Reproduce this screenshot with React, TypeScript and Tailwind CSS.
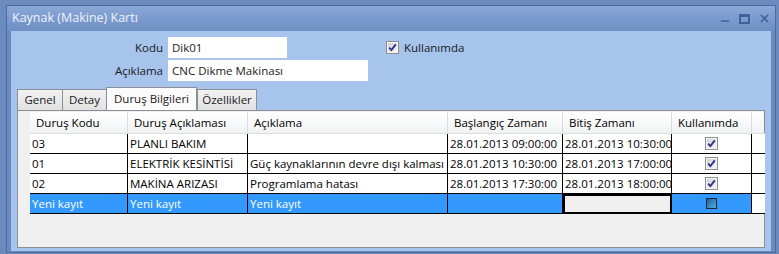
import { Minus, X } from "lucide-react";

const COLS = "grid grid-cols-[11px_98px_120px_200px_115px_109px_80px_13px]";

const HEADERS = [
  "Duruş Kodu",
  "Duruş Açıklaması",
  "Açıklama",
  "Başlangıç Zamanı",
  "Bitiş Zamanı",
  "Kullanımda",
];

const ROWS = [
  ["03", "PLANLI BAKIM", "", "28.01.2013 09:00:00", "28.01.2013 10:30:00"],
  ["01", "ELEKTRİK KESİNTİSİ", "Güç kaynaklarının devre dışı kalması", "28.01.2013 10:30:00", "28.01.2013 17:00:00"],
  ["02", "MAKİNA ARIZASI", "Programlama hatası", "28.01.2013 17:30:00", "28.01.2013 18:00:00"],
];

const TABS = [
  { label: "Genel", w: "w-[45px]" },
  { label: "Detay", w: "w-[44px]" },
  { label: "Duruş Bilgileri", w: "w-[91px]", active: true },
  { label: "Özellikler", w: "w-[60px]" },
];

function Check({ checked = true }: { checked?: boolean }) {
  return (
    <svg width="13" height="13" viewBox="0 0 13 13">
      <rect x="0.5" y="0.5" width="12" height="12" fill="#f4f4f4" stroke="#8e8f92" />
      <rect x="2" y="2" width="9" height="9" fill="url(#cb)" />
      <defs>
        <linearGradient id="cb" x1="0" y1="0" x2="1" y2="1">
          <stop offset="0" stopColor="#cfd1d6" />
          <stop offset="1" stopColor="#f7f7f7" />
        </linearGradient>
      </defs>
      {checked && (
        <path d="M3.2 6.6 L5.4 9 L9.8 3.4" fill="none" stroke="#2c2f86" strokeWidth="1.8" />
      )}
    </svg>
  );
}

function NewRowCheck() {
  return (
    <svg width="11" height="11" viewBox="0 0 11 11">
      <defs>
        <linearGradient id="nb" x1="0" y1="0" x2="1" y2="1">
          <stop offset="0" stopColor="#1f5a8a" />
          <stop offset="1" stopColor="#55b2e6" />
        </linearGradient>
      </defs>
      <rect x="0.5" y="0.5" width="10" height="10" fill="url(#nb)" stroke="#1a2a3e" />
    </svg>
  );
}

export default function App() {
  return (
    <div className="h-[254px] w-[779px] overflow-hidden bg-[#6b8bbf] pt-[5px] pl-[6px] font-['Open_Sans',sans-serif] text-[11.5px]">
      <div className="flex h-[248px] w-[770px] flex-col border border-[#4d6b9c]">
        {/* Title bar */}
        <div className="flex h-[25px] items-center justify-between bg-gradient-to-b from-[#8aa7d7] to-[#6e8fc4] pl-[5px] pr-[4px]">
          <span className="text-[12.5px] text-[#eef3fb]">Kaynak (Makine) Kartı</span>
          <div className="flex items-center gap-[8px] text-[#40609a]">
            <Minus className="mt-[4px] h-[12px] w-[12px]" strokeWidth={3} />
            <span className="block h-[10px] w-[11px] border-2 border-t-[3px] border-[#40609a]" />
            <X className="h-[13px] w-[13px]" strokeWidth={3} />
          </div>
        </div>

        {/* Panel */}
        <div className="mx-[4px] flex h-[220px] flex-col bg-[#a6c4ec] pt-[6px] text-[#1a1a1a]">
          <div className="flex items-center">
            <span className="w-[152px] text-right">Kodu</span>
            <div className="ml-[5px] flex h-[21px] w-[119px] items-center bg-white px-[4px]">Dik01</div>
            <div className="ml-[99px] flex items-center gap-[5px]">
              <Check />
              <span>Kullanımda</span>
            </div>
          </div>
          <div className="mt-[2px] flex items-center">
            <span className="w-[152px] text-right">Açıklama</span>
            <div className="ml-[5px] flex h-[21px] w-[200px] items-center bg-white px-[4px]">CNC Dikme Makinası</div>
          </div>

          {/* Tabs */}
          <div className="mt-[6px] flex h-[23px] items-end pl-[6px]">
            {TABS.map((t, i) => (
              <div
                key={t.label}
                className={`${t.w} flex items-center justify-center border-t border-l border-[#8b8e96] ${
                  t.active
                    ? "h-[23px] border-r bg-[#fbfbfb]"
                    : "h-[21px] bg-gradient-to-b from-[#f2f2f2] to-[#e1e1e1]"
                } ${i === TABS.length - 1 ? "border-r" : ""}`}
              >
                {t.label}
              </div>
            ))}
          </div>

          {/* Grid */}
          <div className="mx-[6px] h-[138px] border border-[#8b8e96] bg-[#f0f0f0] p-[1px] text-black">
            <div className={`${COLS} h-[22px] bg-gradient-to-b from-white to-[#f1f2f4]`}>
              <div className="bg-[#f0f0f0]" />
              {HEADERS.map((h) => (
                <div key={h} className="flex items-center border-r border-b border-[#dcdcdc] pl-[6px]">
                  {h}
                </div>
              ))}
              <div className="border-b border-[#dcdcdc]" />
            </div>

            {ROWS.map((r) => (
              <div key={r[0]} className={`${COLS} h-[20px]`}>
                <div className="bg-[#f0f0f0]" />
                {r.map((c, j) => (
                  <div key={j} className="flex items-center overflow-hidden whitespace-nowrap border-r border-b border-black bg-white pl-[2px]">
                    {c}
                  </div>
                ))}
                <div className="flex items-center justify-center border-r border-b border-black bg-white">
                  <Check />
                </div>
                <div className="border-b border-black bg-white" />
              </div>
            ))}

            <div className={`${COLS} h-[20px] text-white`}>
              <div className="bg-[#f0f0f0]" />
              {["Yeni kayıt", "Yeni kayıt", "Yeni kayıt", ""].map((c, j) => (
                <div key={j} className="flex items-center border-r border-b border-black bg-[#3399ff] pl-[2px]">
                  {c}
                </div>
              ))}
              <div className="border-2 border-black bg-[#f0f0f0]" />
              <div className="flex items-center justify-center border-r border-b border-black bg-[#3399ff]">
                <NewRowCheck />
              </div>
              <div className="border-b border-black bg-white" />
            </div>
          </div>
        </div>
      </div>
    </div>
  );
}
